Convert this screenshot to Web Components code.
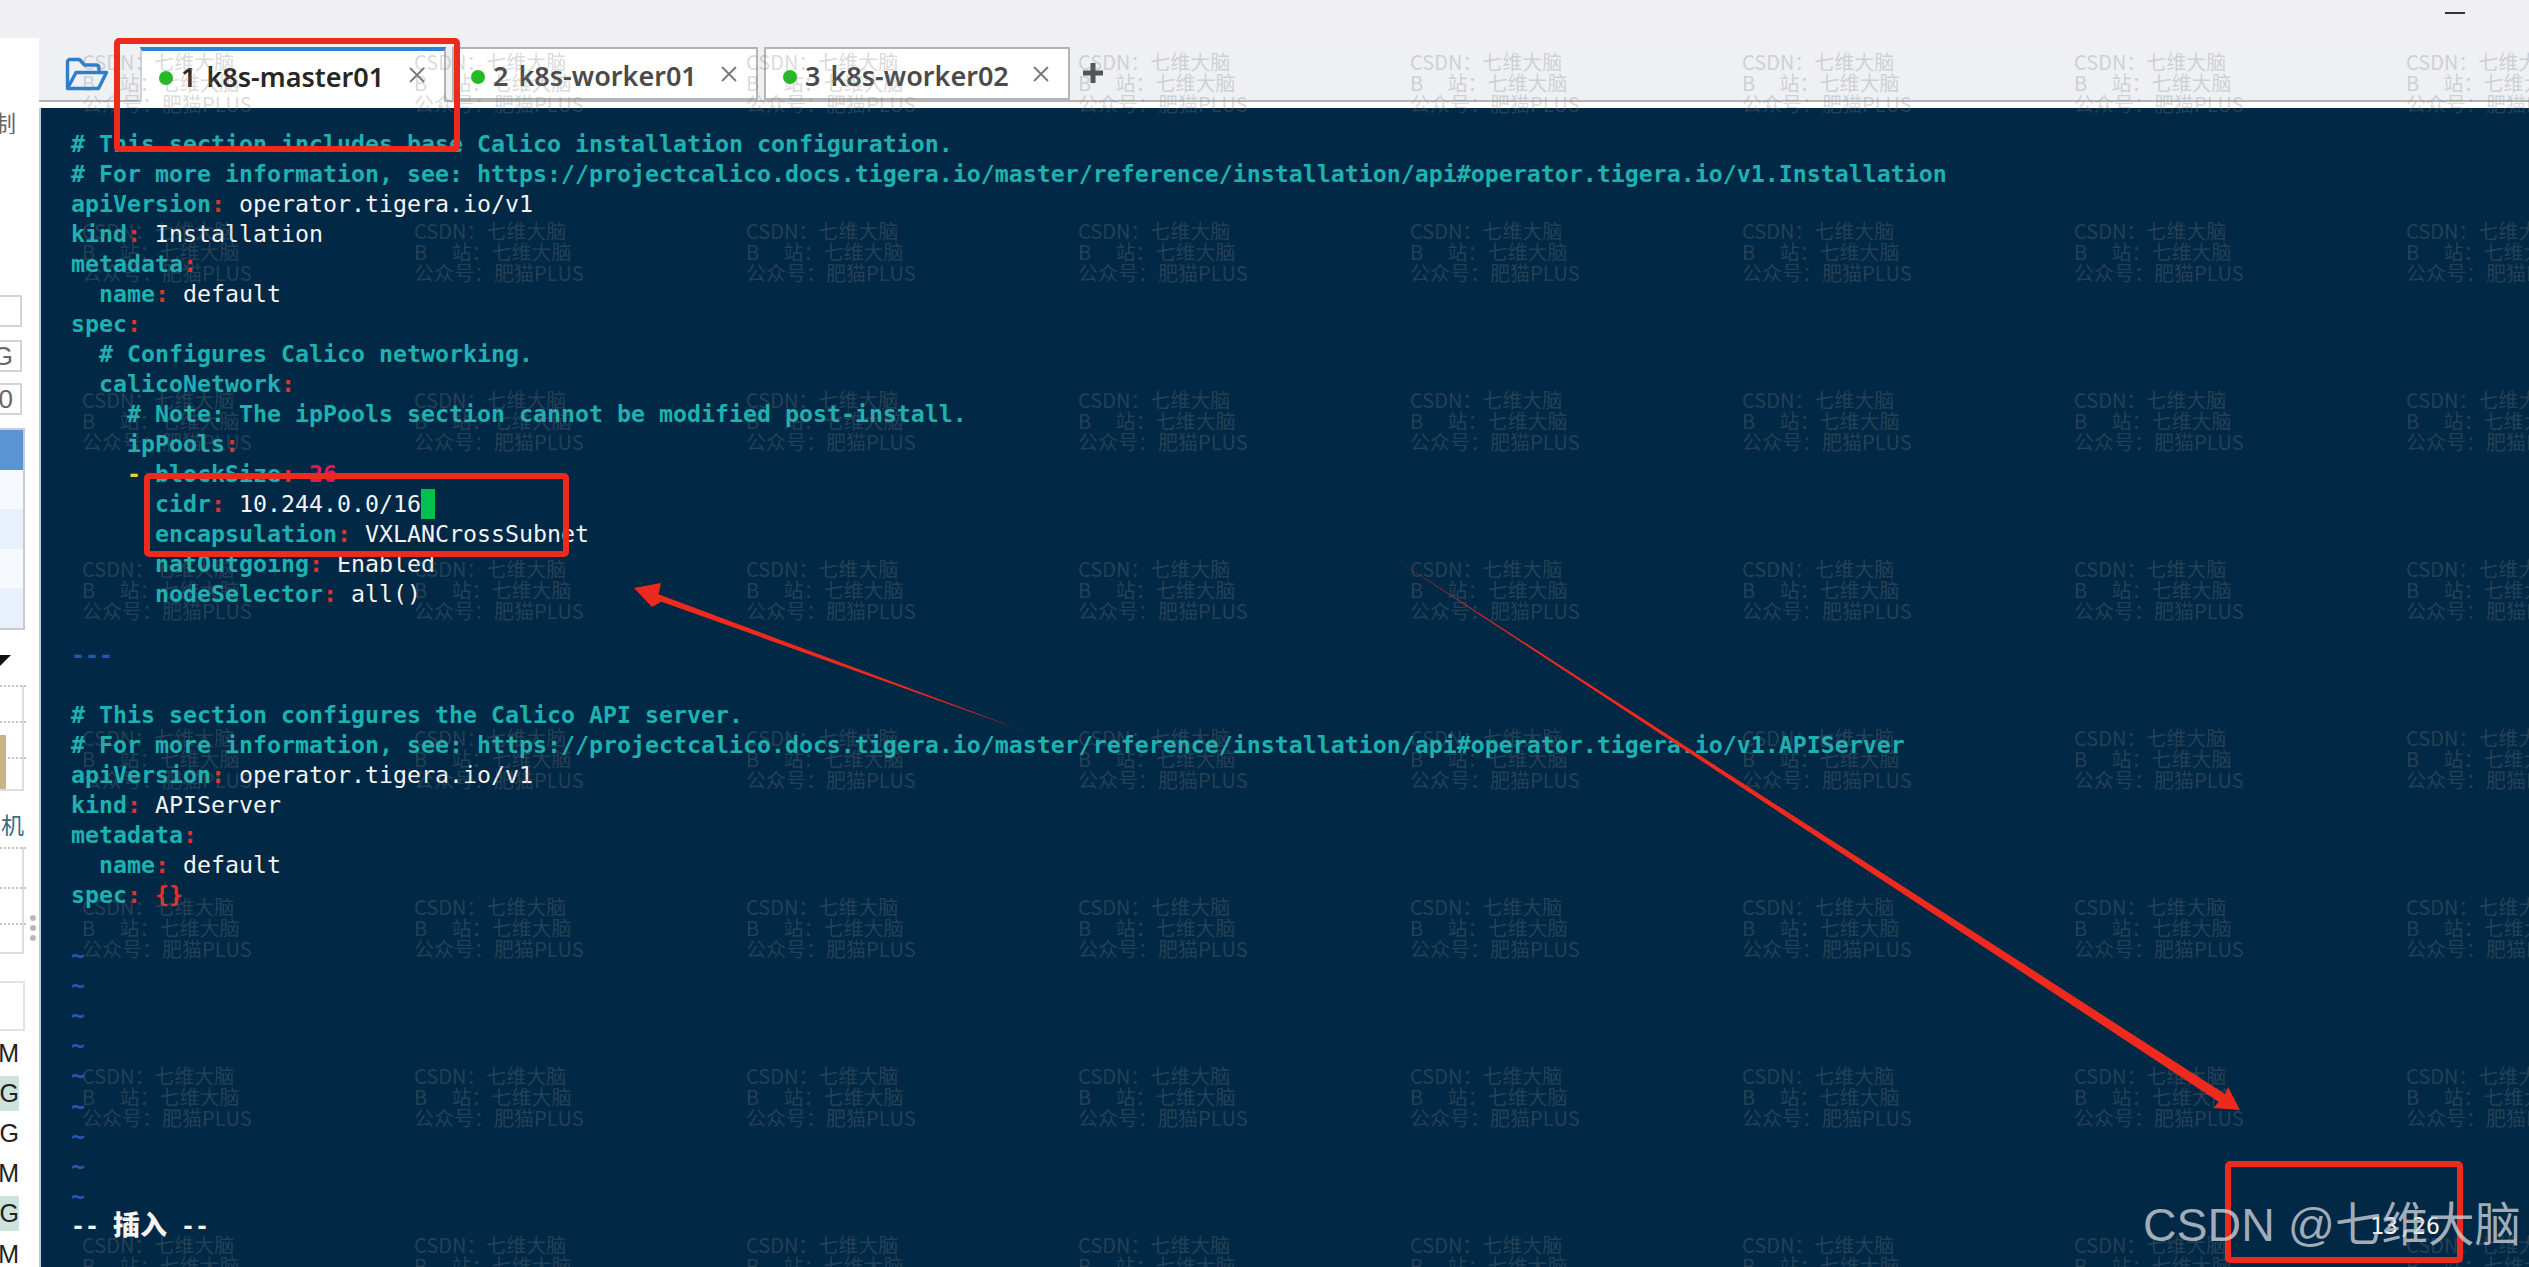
<!DOCTYPE html>
<html>
<head>
<meta charset="utf-8">
<title>k8s-master01</title>
<style>
	html, body { margin: 0; padding: 0; height: 100%; overflow: hidden; background: #f0f0f2; }
</style>
</head>
<body>
<app-shell>
	<side-strip slot="side"></side-strip>
	<tab-bar slot="tabs">
		<term-tab active label="1 k8s-master01"></term-tab>
		<term-tab label="2 k8s-worker01"></term-tab>
		<term-tab label="3 k8s-worker02"></term-tab>
	</tab-bar>
	<vim-terminal slot="term"></vim-terminal>
	<water-marks slot="over"></water-marks>
	<red-marks slot="over"></red-marks>
</app-shell>

<script>
const shellTemplate = document.createElement("template");
shellTemplate.innerHTML = `
<style>
	:host { display: block; position: relative; width: 2529px; height: 1267px; overflow: hidden; background: #f0f0f2; }
	.top { height: 38px; display: flex; justify-content: flex-end; padding-right: 64px; box-sizing: border-box; padding-top: 12px; }
	.min { width: 20px; height: 2px; background: #333; }
	.body { display: flex; height: 1229px; }
	.main { flex: 1; display: flex; flex-direction: column; min-width: 0; background: #fff; }
</style>
<div class="top"><div class="min"></div></div>
<div class="body">
	<slot name="side"></slot>
	<div class="main">
		<slot name="tabs"></slot>
		<slot name="term"></slot>
	</div>
</div>
<slot name="over"></slot>`;

class AppShell extends HTMLElement {
	constructor() {
		super();
		this.attachShadow({ mode: "open" });
		this.shadowRoot.appendChild(shellTemplate.content.cloneNode(true));
	}
}

const sideTemplate = document.createElement("template");
sideTemplate.innerHTML = `
<style>
	:host { display: flex; flex-direction: column; position: relative; width: 39px; flex: none; background: #fff; font-family: "Liberation Sans", "Noto Sans CJK SC", sans-serif; color: #222; overflow: hidden; }
	.clip, .list, .tri, .panel, .empty, .rows { flex: none; }
	.clip { display: flex; justify-content: flex-end; align-items: center; overflow: hidden; white-space: nowrap; box-sizing: border-box; }
	.zhi { width: 16px; height: 24px; margin-top: 72px; font-size: 23px; color: #666; }
	.input { width: 22px; height: 32px; border: 2px solid #d4d4d4; border-left: 0; font-size: 26px; color: #666; padding-right: 7px; }
	.list { width: 25px; height: 202px; margin-top: 13px; border: 2px solid #c8ccd0; border-left: 0; box-sizing: border-box; display: flex; flex-direction: column; }
	.list i { display: block; height: 40px; background: #f6fafe; }
	.list i:nth-child(odd) { background: #e6f1fb; }
	.list i:nth-child(1) { background: #5b93d3; }
	.tri { width: 11px; height: 11px; margin-top: 25px; background: #111; clip-path: polygon(0 0, 100% 0, 0 100%); }
	.panel { width: 24px; box-sizing: border-box; border-right: 2px solid #ddd; border-bottom: 2px solid #ddd; position: relative; }
	.dot { height: 0; border-top: 2px dotted #c4c4c4; width: 26px; }
	.tan { position: absolute; left: 0; top: 50px; width: 6px; bottom: 0; background: #c8b488; }
	.ji { width: 24px; height: 24px; margin-top: 21px; font-size: 23px; color: #3d6a8a; }
	.empty { width: 25px; height: 50px; margin-top: 27px; border: 2px solid #e2e2e2; border-left: 0; box-sizing: border-box; }
	.rows { margin-top: 2px; display: flex; flex-direction: column; }
	.row { flex: none; width: 19px; height: 40.200px; font-size: 25px; color: #222; }
	.row span { padding: 3px 0; }
	.row.on span { background: #cfe3dd; padding-left: 20px; }
	.row.half span { background: linear-gradient(90deg, transparent 48%, #cfe3dd 48%); padding-left: 20px; }
	.grip { position: absolute; left: 30px; top: 877px; display: flex; flex-direction: column; gap: 4px; }
	.grip i { display: block; width: 6px; height: 6px; border-radius: 50%; background: #b8b8b8; }
</style>
<div class="clip zhi"><span>控制</span></div>
<div class="clip input" style="margin-top:161px"></div>
<div class="clip input" style="margin-top:13px"><span>MG</span></div>
<div class="clip input" style="margin-top:11px"><span>70</span></div>
<div class="list"><i></i><i></i><i></i><i></i><i></i></div>
<div class="tri"></div>
<div class="panel" style="height:106px;margin-top:19px">
	<div class="dot"></div>
	<div class="dot" style="margin-top:34px"></div>
	<div class="dot" style="margin-top:34px"></div>
	<div class="tan"></div>
</div>
<div class="clip ji"><span>主机</span></div>
<div class="panel" style="height:107px;margin-top:11px">
	<div class="dot"></div>
	<div class="dot" style="margin-top:38px"></div>
	<div class="dot" style="margin-top:34px"></div>
</div>
<div class="empty"></div>
<div class="rows">
	<div class="clip row"><span>M</span></div>
	<div class="clip row on"><span>G</span></div>
	<div class="clip row"><span>G</span></div>
	<div class="clip row"><span>M</span></div>
	<div class="clip row half"><span>G</span></div>
	<div class="clip row"><span>M</span></div>
</div>
<div class="grip"><i></i><i></i><i></i></div>`;

class SideStrip extends HTMLElement {
	constructor() {
		super();
		this.attachShadow({ mode: "open" });
		this.shadowRoot.appendChild(sideTemplate.content.cloneNode(true));
	}
}

const tabBarTemplate = document.createElement("template");
tabBarTemplate.innerHTML = `
<style>
	:host { display: flex; align-items: flex-end; height: 64px; box-sizing: border-box; padding-left: 26px; background: #eef0f3; border-bottom: 2px solid #b4b4b4; flex: none; }
	.open { width: 44px; height: 34px; margin: 0 31px 9px 0; align-self: flex-end; }
	.tabs { display: flex; align-items: flex-end; gap: 6px; height: 100%; }
	.plus { width: 20px; height: 20px; margin: 0 0 17px 13px; }
</style>
<svg class="open" viewBox="0 0 44 34" fill="none" stroke="#2f7fc8" stroke-width="3.4" stroke-linejoin="round" stroke-linecap="round">
	<path d="M2.5 30V5a2.5 2.5 0 0 1 2.5-2.5h9.5l5 5.500h12a2.500 2.500 0 0 1 2.500 2.500v4"/>
	<path d="M2.500 31.500 11 15.500h30.500l-8 16z"/>
</svg>
<div class="tabs"><slot></slot></div>
<svg class="plus" viewBox="0 0 20 20" fill="#555"><path d="M7.500 0h5v7.500H20v5h-7.500V20h-5v-7.500H0v-5h7.500z"/></svg>`;

class TabBar extends HTMLElement {
	constructor() {
		super();
		this.attachShadow({ mode: "open" });
		this.shadowRoot.appendChild(tabBarTemplate.content.cloneNode(true));
	}
}

const tabTemplate = document.createElement("template");
tabTemplate.innerHTML = `
<style>
	:host { display: flex; align-items: center; width: 306px; height: 53px; box-sizing: border-box; padding: 4px 0 0 17px; background: #fff; border: 2px solid #b4b4b4; font: 600 27px "Noto Sans", "Liberation Sans", sans-serif; word-spacing: 3px; color: #4a4a4a; white-space: nowrap; }
	:host([active]) { height: 55px; margin-bottom: -2px; border-top: 4px solid #2f7fd8; border-bottom: 0; border-left-color: #d0d0d0; border-right-color: #b4b4b4; color: #262626; padding: 1px 0 1px 17px; }
	.dot { width: 14px; height: 14px; border-radius: 50%; background: #22bb22; margin: 3px 8px 0 0; flex: none; }
	.label { flex: 1; }
	.close { width: 18px; height: 18px; margin: -3px 18px 0 0; flex: none; }
</style>
<span class="dot"></span>
<span class="label"></span>
<svg class="close" viewBox="0 0 18 18" stroke="#777" stroke-width="1.800" fill="none"><path d="M2 2l14 14M16 2L2 16"/></svg>`;

class TermTab extends HTMLElement {
	constructor() {
		super();
		this.attachShadow({ mode: "open" });
		this.shadowRoot.appendChild(tabTemplate.content.cloneNode(true));
		this.shadowRoot.querySelector(".label").innerHTML = this.getAttribute("label");
	}
}

const termTemplate = document.createElement("template");
termTemplate.innerHTML = `
<style>
	:host { display: block; flex: none; height: 1159px; margin-top: 6px; box-sizing: border-box; padding: 20.500px 89px 0 30px; background: #012845; border-left: 2px solid #c0ccd4; font-family: "DejaVu Sans Mono", "Noto Sans CJK SC", monospace; font-size: 23.250px; color: #f4f4f4; overflow: hidden; }
	.line { display: block; height: 30.070px; line-height: 30.070px; white-space: pre; }
	.last { display: flex; justify-content: space-between; }
	.n { color: #1db2b2; font-weight: bold; }
	.c { color: #e03030; font-weight: bold; }
	.p { color: #e0185c; font-weight: bold; }
	.y { color: #e6d040; font-weight: bold; }
	.b { color: #2358b8; font-weight: bold; }
	.r { color: #ef2929; font-weight: bold; }
	.cur { display: inline-block; width: 14px; height: 30px; background: #00c050; vertical-align: top; }
	.mode { font-weight: bold; }
	.mode b { font-size: 27px; line-height: 1; vertical-align: -1px; }
</style>
<div class="lines"></div>`;

const key = (indent, name, value) =>
	`${indent}<span class="n">${name}</span><span class="c">:</span>${value === undefined ? "" : " " + value}`;
const note = (text) => `<span class="n">${text}</span>`;

const yamlLines = [
	note("# This section includes base Calico installation configuration."),
	note("# For more information, see: https://projectcalico.docs.tigera.io/master/reference/installation/api#operator.tigera.io/v1.Installation"),
	key("", "apiVersion", "operator.tigera.io/v1"),
	key("", "kind", "Installation"),
	key("", "metadata"),
	key("  ", "name", "default"),
	key("", "spec"),
	"  " + note("# Configures Calico networking."),
	key("  ", "calicoNetwork"),
	"    " + note("# Note: The ipPools section cannot be modified post-install."),
	key("    ", "ipPools"),
	`    <span class="y">-</span> ` + key("", "blockSize", `<span class="p">26</span>`),
	key("      ", "cidr", `10.244.0.0/16<span class="cur"></span>`),
	key("      ", "encapsulation", "VXLANCrossSubnet"),
	key("      ", "natOutgoing", "Enabled"),
	key("      ", "nodeSelector", "all()"),
	"",
	`<span class="b">---</span>`,
	"",
	note("# This section configures the Calico API server."),
	note("# For more information, see: https://projectcalico.docs.tigera.io/master/reference/installation/api#operator.tigera.io/v1.APIServer"),
	key("", "apiVersion", "operator.tigera.io/v1"),
	key("", "kind", "APIServer"),
	key("", "metadata"),
	key("  ", "name", "default"),
	key("", "spec", `<span class="r">{}</span>`),
	"",
];

class VimTerminal extends HTMLElement {
	constructor() {
		super();
		this.attachShadow({ mode: "open" });
		this.shadowRoot.appendChild(termTemplate.content.cloneNode(true));
		this.loadLines();
	}

	loadLines() {
		var box = this.shadowRoot.querySelector(".lines");
		var html = yamlLines.map((l) => `<span class="line">${l}</span>`);
		for (var i = 0; i < 9; i++) {
			html.push(`<span class="line b">~</span>`);
		}
		html.push(`<span class="line last"><span class="mode">-- <b>插入</b> --</span><span>13,26</span></span>`);
		box.innerHTML = html.join("");
	}
}

const markTemplate = document.createElement("template");
markTemplate.innerHTML = `
<style>
	:host { position: absolute; inset: 0; display: block; overflow: hidden; pointer-events: none; }
	.grid { display: grid; grid-template-columns: repeat(8, 332px); grid-auto-rows: 169px; padding: 51px 0 0 82px; }
	.cell { font: 20px/21px "Noto Sans CJK SC", "Noto Sans", sans-serif; color: rgba(125, 128, 130, 0.3); white-space: pre; }
</style>
<div class="grid"></div>`;

class WaterMarks extends HTMLElement {
	constructor() {
		super();
		this.attachShadow({ mode: "open" });
		this.shadowRoot.appendChild(markTemplate.content.cloneNode(true));
		var grid = this.shadowRoot.querySelector(".grid");
		for (var i = 0; i < 64; i++) {
			var cell = document.createElement("div");
			cell.className = "cell";
			cell.textContent = "CSDN：七维大脑\nB　 站：七维大脑\n公众号：肥猫PLUS";
			grid.appendChild(cell);
		}
	}
}

const redTemplate = document.createElement("template");
redTemplate.innerHTML = `
<style>
	:host { position: absolute; inset: 0; display: block; pointer-events: none; }
	svg { position: absolute; left: 0; top: 0; }
	.sign { position: absolute; left: 2143px; top: 1197px; font: 46.500px/56px "Liberation Sans", "Noto Sans CJK SC", sans-serif; color: rgba(205, 210, 215, 0.78); white-space: nowrap; }
</style>
<svg width="2529" height="1267" viewBox="0 0 2529 1267" fill="none" stroke="#ee2a1e" stroke-width="6" stroke-linejoin="round">
	<rect x="117" y="41" width="340" height="108" rx="2"/>
	<rect x="147" y="476" width="419" height="78" rx="2"/>
	<rect x="2228" y="1164" width="232" height="96" rx="2"/>
	<g fill="#ee2a1e" stroke="none">
		<polygon points="634,588 661,583 658.600,594.200 1024,731 661.400,601.800 652,607"/>
		<polygon points="2240,1110 2228,1087 2225,1094 1392,557 2219,1102 2213,1108"/>
	</g>
</svg>
<div class="sign">CSDN @七维大脑</div>`;

class RedMarks extends HTMLElement {
	constructor() {
		super();
		this.attachShadow({ mode: "open" });
		this.shadowRoot.appendChild(redTemplate.content.cloneNode(true));
	}
}

customElements.define("app-shell", AppShell);
customElements.define("side-strip", SideStrip);
customElements.define("tab-bar", TabBar);
customElements.define("term-tab", TermTab);
customElements.define("vim-terminal", VimTerminal);
customElements.define("water-marks", WaterMarks);
customElements.define("red-marks", RedMarks);
</script>
</body>
</html>
